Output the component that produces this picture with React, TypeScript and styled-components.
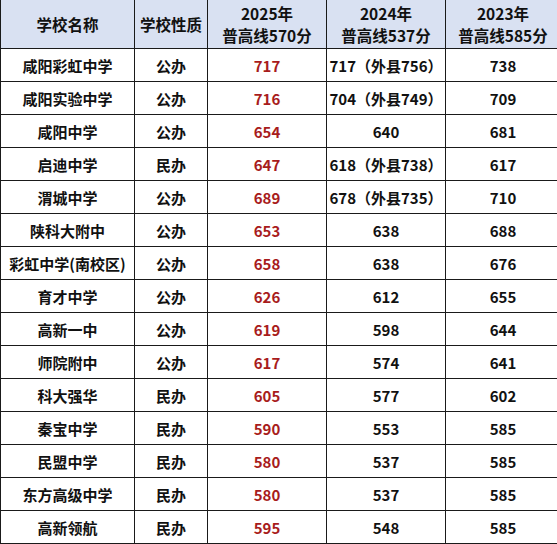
import React from "react";
import styled, { createGlobalStyle } from "styled-components";

type Row = {
  name: string;
  kind: string;
  y2025: string;
  y2024: string;
  y2023: string;
};

const rows: Row[] = [
  { name: "咸阳彩虹中学", kind: "公办", y2025: "717", y2024: "717（外县756）", y2023: "738" },
  { name: "咸阳实验中学", kind: "公办", y2025: "716", y2024: "704（外县749）", y2023: "709" },
  { name: "咸阳中学", kind: "公办", y2025: "654", y2024: "640", y2023: "681" },
  { name: "启迪中学", kind: "民办", y2025: "647", y2024: "618（外县738）", y2023: "617" },
  { name: "渭城中学", kind: "公办", y2025: "689", y2024: "678（外县735）", y2023: "710" },
  { name: "陕科大附中", kind: "公办", y2025: "653", y2024: "638", y2023: "688" },
  { name: "彩虹中学(南校区)", kind: "公办", y2025: "658", y2024: "638", y2023: "676" },
  { name: "育才中学", kind: "公办", y2025: "626", y2024: "612", y2023: "655" },
  { name: "高新一中", kind: "公办", y2025: "619", y2024: "598", y2023: "644" },
  { name: "师院附中", kind: "公办", y2025: "617", y2024: "574", y2023: "641" },
  { name: "科大强华", kind: "民办", y2025: "605", y2024: "577", y2023: "602" },
  { name: "秦宝中学", kind: "民办", y2025: "590", y2024: "553", y2023: "585" },
  { name: "民盟中学", kind: "民办", y2025: "580", y2024: "537", y2023: "585" },
  { name: "东方高级中学", kind: "民办", y2025: "580", y2024: "537", y2023: "585" },
  { name: "高新领航", kind: "民办", y2025: "595", y2024: "548", y2023: "585" },
];

const GlobalStyle = createGlobalStyle`
  html, body {
    margin: 0;
    padding: 0;
    background: #ffffff;
  }
  body {
    font-family: "Noto Sans CJK SC", "Noto Sans", sans-serif;
  }
`;

const Table = styled.table`
  border-collapse: collapse;
  table-layout: fixed;
  width: 555px;
  margin-top: -1px;
`;

const HeadCell = styled.th<{ $w: number }>`
  width: ${(p) => p.$w}px;
  height: 48px;
  padding: 0;
  background: #d9e1f2;
  border: 1px solid #1a1a1a;
  color: #111;
  font-size: 15.5px;
  font-weight: 700;
  line-height: 22px;
  text-align: center;
  vertical-align: middle;
`;

const Cell = styled.td<{ $red?: boolean }>`
  height: 32px;
  padding: 0;
  border: 1px solid #1a1a1a;
  color: ${(p) => (p.$red ? "#a81c1c" : "#111")};
  font-size: 15px;
  font-weight: 700;
  text-align: center;
  vertical-align: middle;
  white-space: nowrap;
`;

export default function App() {
  return (
    <>
      <GlobalStyle />
      <Table>
        <thead>
          <tr>
            <HeadCell $w={133}>学校名称</HeadCell>
            <HeadCell $w={72}>学校性质</HeadCell>
            <HeadCell $w={118}>
              2025年
              <br />
              普高线570分
            </HeadCell>
            <HeadCell $w={118}>
              2024年
              <br />
              普高线537分
            </HeadCell>
            <HeadCell $w={114}>
              2023年
              <br />
              普高线585分
            </HeadCell>
          </tr>
        </thead>
        <tbody>
          {rows.map((r, i) => (
            <tr key={i}>
              <Cell>{r.name}</Cell>
              <Cell>{r.kind}</Cell>
              <Cell $red>{r.y2025}</Cell>
              <Cell>{r.y2024}</Cell>
              <Cell>{r.y2023}</Cell>
            </tr>
          ))}
        </tbody>
      </Table>
    </>
  );
}
